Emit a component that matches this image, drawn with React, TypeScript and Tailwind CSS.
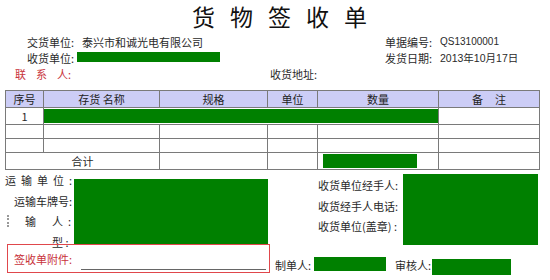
import React from "react";

const cell = "border border-[#7a7a7a] p-0 text-center align-middle";

export default function App() {
  return (
    <div className="w-[550px] h-[280px] overflow-hidden bg-white text-[11px] leading-[16px] text-[#2a2a2a] font-['Noto_Sans_CJK_SC',sans-serif]">
      {/* title */}
      <div className="flex h-[34px] pl-[192px] text-[23px] leading-[32px] text-[#111]">
        <span className="tracking-[15px]">货物签收</span>
        <span>单</span>
      </div>

      {/* header info */}
      <div className="flex h-[16px]">
        <div className="flex w-[385px] pl-[27px]">
          <span className="w-[55px]">交货单位:</span>
          <span>泰兴市和诚光电有限公司</span>
        </div>
        <span className="w-[55px]">单据编号:</span>
        <span className="font-['Liberation_Sans',sans-serif] text-[10px]">QS13100001</span>
      </div>
      <div className="flex h-[16px]">
        <div className="flex w-[385px] pl-[27px]">
          <span className="w-[50px]">收货单位:</span>
          <span className="mt-[2px] h-[10px] w-[143px] bg-[#008000]" />
        </div>
        <span className="w-[55px]">发货日期:</span>
        <span className="font-['Liberation_Sans','Noto_Sans_CJK_SC',sans-serif] text-[10.5px]">2013年10月17日</span>
      </div>
      <div className="flex h-[16px]">
        <div className="w-[270px] pl-[15px] text-[#c8323a]">
          <span className="tracking-[10px]">联系</span>人:
        </div>
        <span>收货地址:</span>
      </div>

      {/* goods table */}
      <table className="ml-[5px] mt-[8px] w-[534px] table-fixed border-collapse">
        <colgroup>
          <col className="w-[38px]" />
          <col className="w-[116px]" />
          <col className="w-[108px]" />
          <col className="w-[50px]" />
          <col className="w-[121px]" />
          <col className="w-[101px]" />
        </colgroup>
        <thead>
          <tr className="h-[16px] bg-[#cccdf6] text-[#222]">
            <td className={cell}>序号</td>
            <td className={cell}>存货 名称</td>
            <td className={cell}>规格</td>
            <td className={cell}>单位</td>
            <td className={cell}>数量</td>
            <td className={cell}>
              <span className="tracking-[12px]">备</span>注
            </td>
          </tr>
        </thead>
        <tbody>
          <tr className="h-[15px]">
            <td className={cell}>1</td>
            <td className={cell} colSpan={4}>
              <div className="h-[14px] bg-[#008000]" />
            </td>
            <td className={cell} />
          </tr>
          <tr className="h-[14px]">
            <td className={cell} />
            <td className={cell} />
            <td className={cell} />
            <td className={cell} />
            <td className={cell} />
            <td className={cell} />
          </tr>
          <tr className="h-[14px]">
            <td className={cell} />
            <td className={cell} />
            <td className={cell} />
            <td className={cell} />
            <td className={cell} />
            <td className={cell} />
          </tr>
          <tr className="h-[14px]">
            <td className={cell} colSpan={2}>合计</td>
            <td className={cell} />
            <td className={cell} />
            <td className={cell}>
              <div className="ml-[5px] h-[14px] w-[94px] bg-[#008000]" />
            </td>
            <td className={cell} />
          </tr>
        </tbody>
      </table>

      {/* bottom section */}
      <div className="flex">
        <div className="w-[272px]">
          <div className="flex">
            <div className="relative w-[74px] leading-[20.5px]">
              <div className="flex justify-end pr-[2px]">
                <span className="tracking-[5px]">运输单位</span>:
              </div>
              <div className="text-right pr-[2px]">运输车牌号:</div>
              <div className="flex pl-[25px] pr-[2px]">
                <span className="w-[27px]">输</span>
                <span className="w-[16px]">人</span>:
              </div>
              <div className="pl-[52px]">型 :</div>
              <span className="absolute left-[7px] top-[45px] h-[12px] border-l-2 border-dotted border-[#999]" />
            </div>
            <div className="mt-[9px] h-[65px] w-[194px] bg-[#008000]" />
          </div>
          <div className="relative -mt-[8px] ml-[7px] flex h-[29px] w-[263px] border border-[#e0474c]">
            <span className="mt-[6px] pl-[6px] text-[#c8323a]">签收单附件:</span>
            <span className="ml-[9px] mt-[24px] h-0 w-[185px] border-t border-[#666]" />
          </div>
        </div>

        <div className="w-[278px]">
          <div className="flex">
            <div className="w-[131px] pl-[46px] pt-[5px] leading-[20.5px]">
              <div>收货单位经手人:</div>
              <div>收货经手人电话:</div>
              <div>收货单位(盖章) :</div>
            </div>
            <div className="mt-[4px] h-[71px] w-[135px] bg-[#008000]" />
          </div>
          <div className="mt-[12px] flex pl-[3px]">
            <span className="w-[39px]">制单人:</span>
            <span className="h-[14px] w-[72px] bg-[#008000]" />
            <span className="ml-[9px] w-[37px]">审核人:</span>
            <span className="mt-[2px] h-[16px] w-[79px] bg-[#008000]" />
          </div>
        </div>
      </div>
    </div>
  );
}
